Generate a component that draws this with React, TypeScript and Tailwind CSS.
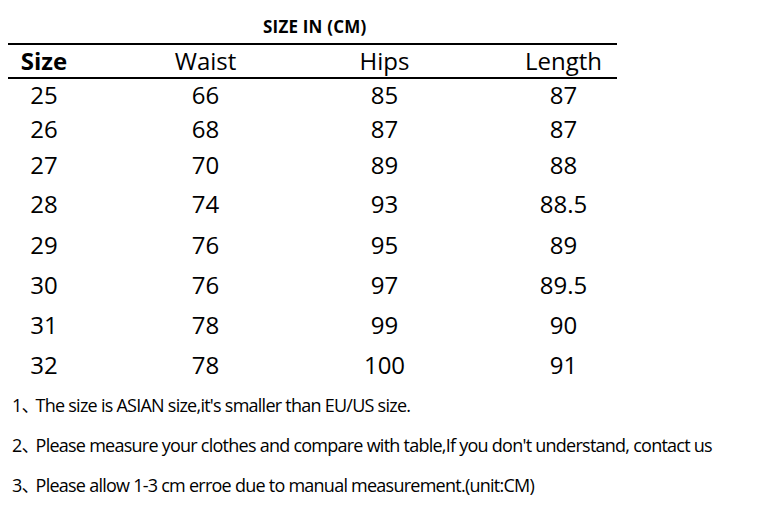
import React from "react";

const rows: { s: string; w: string; h: string; l: string; cls: string }[] = [
  { s: "25", w: "66", h: "85", l: "87", cls: "h-[32px] leading-[32px]" },
  { s: "26", w: "68", h: "87", l: "87", cls: "h-[36px] leading-[36px]" },
  { s: "27", w: "70", h: "89", l: "88", cls: "h-[36px] leading-[36px]" },
  { s: "28", w: "74", h: "93", l: "88.5", cls: "h-[42px] leading-[42px]" },
  { s: "29", w: "76", h: "95", l: "89", cls: "h-[40px] leading-[40px]" },
  { s: "30", w: "76", h: "97", l: "89.5", cls: "h-[40px] leading-[40px]" },
  { s: "31", w: "78", h: "99", l: "90", cls: "h-[40px] leading-[40px]" },
  { s: "32", w: "78", h: "100", l: "91", cls: "h-[40px] leading-[40px]" },
];

const grid = "grid grid-cols-[72px_251px_107px_72px_107px] text-center";

const notes: [string, string][] = [
  ["1", "The size is ASIAN size,it's smaller than EU/US size."],
  ["2", "Please measure your clothes and compare with table,If you don't understand, contact us"],
  ["3", "Please allow 1-3 cm erroe due to manual measurement.(unit:CM)"],
];

export default function App() {
  return (
    <div className="w-[766px] h-[513px] bg-white text-black font-['Open_Sans','Noto_Sans_CJK_SC',sans-serif] overflow-hidden">
      <div className="pt-[17px] h-[43px]">
        <div className="h-[20px] leading-[20px] text-[17px] font-bold pl-[263px] tracking-[0.2px]">SIZE IN (CM)</div>
      </div>
      <div className="ml-[8px] w-[609px]">
        <div className={`${grid} border-t-2 border-b-2 border-black h-[36px] leading-[32px] text-[24px]`}>
          <div className="font-bold">Size</div>
          <div>Waist</div>
          <div>Hips</div>
          <div></div>
          <div>Length</div>
        </div>
        {rows.map((r) => (
          <div key={r.s} className={`${grid} text-[24px] ${r.cls}`}>
            <div>{r.s}</div>
            <div>{r.w}</div>
            <div>{r.h}</div>
            <div></div>
            <div>{r.l}</div>
          </div>
        ))}
      </div>
      <div className="pl-[12px] text-[18px] leading-[40px] tracking-[-0.75px] whitespace-nowrap">
        {notes.map(([n, t]) => (
          <div key={n}>
            {n}
            <span className="tracking-[-4px]">、</span>
            {t}
          </div>
        ))}
      </div>
    </div>
  );
}
